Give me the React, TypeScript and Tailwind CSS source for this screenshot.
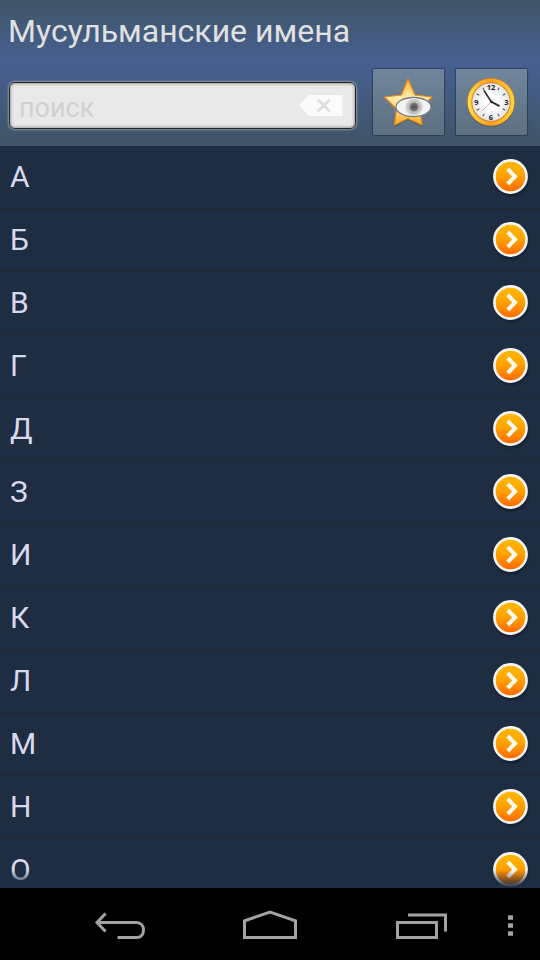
import React from "react";

const letters = ["А", "Б", "В", "Г", "Д", "З", "И", "К", "Л", "М", "Н", "О"];

function StarEyeIcon() {
  return (
    <svg width="72" height="66" viewBox="0 0 72 66">
      <defs>
        <linearGradient id="star" x1="0" y1="0" x2="0" y2="1">
          <stop offset="0" stopColor="#ffb52c" />
          <stop offset="0.4" stopColor="#ffe9a8" />
          <stop offset="0.65" stopColor="#ffd982" />
          <stop offset="1" stopColor="#ffac28" />
        </linearGradient>
        <radialGradient id="eye">
          <stop offset="0" stopColor="#4e4e4e" />
          <stop offset="0.42" stopColor="#777777" />
          <stop offset="0.52" stopColor="#b4b4b4" />
          <stop offset="0.85" stopColor="#d0d0d0" />
          <stop offset="1" stopColor="#f0f0f0" />
        </radialGradient>
      </defs>
      <path d="M35 11 L42 27 L59 29 L47 41 L50 58 L35 51 L21 58 L24 41 L12 29 L29 27 Z" fill="#1f2d3f" opacity="0.35" />
      <path
        d="M35 10 L42 26 L59 28 L47 40 L49 56 L35 49.500 L21.500 56 L23.500 40 L11.500 28 L28.500 26 Z"
        fill="url(#star)"
        stroke="#e88918"
        strokeWidth="1.2"
        strokeLinejoin="round"
      />
      <ellipse cx="40.500" cy="38" rx="17.500" ry="9.500" fill="#f3f3f3" stroke="#777c80" strokeWidth="1.3" />
      <circle cx="41" cy="38" r="9" fill="url(#eye)" />
    </svg>
  );
}

function ClockIcon() {
  return (
    <svg width="72" height="66" viewBox="0 0 72 66">
      <defs>
        <linearGradient id="rim" x1="0" y1="0" x2="1" y2="0">
          <stop offset="0" stopColor="#ffd94a" />
          <stop offset="0.5" stopColor="#fb9d1c" />
          <stop offset="1" stopColor="#ffd238" />
        </linearGradient>
        <radialGradient id="face">
          <stop offset="0.3" stopColor="#ffffff" />
          <stop offset="1" stopColor="#dddfe2" />
        </radialGradient>
      </defs>
      <circle cx="35" cy="34" r="24" fill="#1f2d3f" opacity="0.3" />
      <circle cx="35" cy="33" r="21.300" fill="url(#face)" stroke="#d8811b" strokeWidth="5.200" />
      <circle cx="35" cy="33" r="21.500" fill="none" stroke="url(#rim)" strokeWidth="3.600" />
      {[30, 60, 120, 150, 210, 240, 300, 330].map((angle) => (
        <path key={angle} d="M35 16.500V19.500" stroke="#555555" strokeWidth="1" transform={`rotate(${angle} 35 33)`} />
      ))}
      <g fill="#1c1c1c" fontFamily="Open Sans, sans-serif" fontSize="7.500" fontWeight="700" textAnchor="middle">
        <text x="35" y="20.800">12</text>
        <text x="50.500" y="35.800">3</text>
        <text x="35" y="51">6</text>
        <text x="20.300" y="35.800">9</text>
      </g>
      <path d="M37.500 30.500L26 42" stroke="#ef9480" strokeWidth="0.800" />
      <path d="M36 34L28 21.500" stroke="#282828" strokeWidth="1.500" />
      <path d="M34 32L43.500 37.200" stroke="#282828" strokeWidth="1.900" />
    </svg>
  );
}

function GoIcon() {
  return (
    <svg className="shrink-0" width="40" height="42" viewBox="0 0 40 42">
      <defs>
        <linearGradient id="go" x1="0" y1="0" x2="0" y2="1">
          <stop offset="0" stopColor="#ffb900" />
          <stop offset="0.45" stopColor="#ffa500" />
          <stop offset="1" stopColor="#ff6500" />
        </linearGradient>
        <radialGradient id="goShadow">
          <stop offset="0.75" stopColor="#07101c" stopOpacity="0.6" />
          <stop offset="1" stopColor="#07101c" stopOpacity="0" />
        </radialGradient>
      </defs>
      <circle cx="21.500" cy="23" r="19" fill="url(#goShadow)" />
      <circle cx="20.500" cy="20.500" r="16.100" fill="url(#go)" stroke="#f5f5f5" strokeWidth="2.600" />
      <path d="M17.700 13L25 20.500L17.700 28" fill="none" stroke="#fff9ef" strokeWidth="4" />
    </svg>
  );
}

function ToolButton({ label, children }: { label: string; children: React.ReactNode }) {
  return (
    <button
      aria-label={label}
      className="h-[66px] w-[71px] overflow-hidden rounded-[1px] bg-linear-to-b from-[#71869d] to-[#5d7081] shadow-[0_0_1px_1px_rgba(35,48,68,0.65)]"
    >
      {children}
    </button>
  );
}

function NavBar() {
  return (
    <nav className="h-[72px] shrink-0 bg-black">
      <svg width="540" height="72" viewBox="0 0 540 72" fill="none" stroke="#a3a3a3" strokeWidth="3">
        {/* back */}
        <path d="M97 34.500H136.500C141 34.500 143.500 38 143.500 42C143.500 46.500 141 49.500 136.500 49.500H117.500" />
        <path d="M105.500 25.500L97 34.500L105.500 43.500" />
        {/* home */}
        <path d="M244.500 49.500V32.800L270 24L295.500 32.800V49.500Z" />
        {/* recent apps */}
        <path d="M397.500 34.500H436.500V49.500H397.500Z" />
        <path d="M408 27H445.500V43.500" />
        <path d="M508 29.500H513M508 37.500H513M508 45.500H513" strokeWidth="4.500" />
      </svg>
    </nav>
  );
}

export default function App() {
  return (
    <main className="flex h-[960px] w-[540px] flex-col overflow-hidden bg-[#1e2d42] font-[Roboto,sans-serif]">
      <header className="h-[146px] shrink-0 bg-linear-to-b from-[#405467] via-[#466091] via-[42%] to-[#405467] pt-[11px]">
        <h1 className="pl-2 text-[32px] leading-10 whitespace-nowrap text-[#e1e1e1]">Мусульманские имена</h1>
        <div className="mt-[18px] flex items-start pl-[9px]">
          <div className="mt-[13px] flex h-[47px] w-[347px] items-center justify-between rounded-[6px] border border-[#252525] bg-[#e9e9e9] pr-3 pl-[9px] shadow-[0_0_2px_1px_rgba(200,200,200,0.55),inset_0_0_3px_1px_rgba(70,70,70,0.45)]">
            <input
              type="text"
              placeholder="поиск"
              className="w-[240px] bg-transparent pt-1 text-[27px] leading-8 text-[#555555] outline-none placeholder:text-[#d0d0d0]"
            />
            <svg width="44" height="22" viewBox="0 0 44 22">
              <path d="M0 10.500L10 0H43.500V21H10Z" fill="#fbfbfb" />
              <path d="M18.500 4.500L31 16.500M31 4.500L18.500 16.500" stroke="#dddddd" strokeWidth="2.500" />
            </svg>
          </div>
          <div className="ml-[17px] flex gap-3">
            <ToolButton label="Избранное">
              <StarEyeIcon />
            </ToolButton>
            <ToolButton label="История">
              <ClockIcon />
            </ToolButton>
          </div>
        </div>
      </header>

      <section className="relative min-h-0 flex-1 overflow-hidden">
        <ul>
          {letters.map((letter) => (
            <li key={letter} className="flex h-[63px] items-center justify-between border-b border-[#262828] pr-[10px] pl-[10px]">
              <span className="text-[30px] leading-none text-[#d8d9ec]">{letter}</span>
              <GoIcon />
            </li>
          ))}
        </ul>
        {/* fading edge of the scrolled list */}
        <div className="absolute inset-x-0 bottom-0 h-[18px] bg-linear-to-b from-[#1e2d42]/0 to-[#1e2d42]" />
      </section>

      <NavBar />
    </main>
  );
}
